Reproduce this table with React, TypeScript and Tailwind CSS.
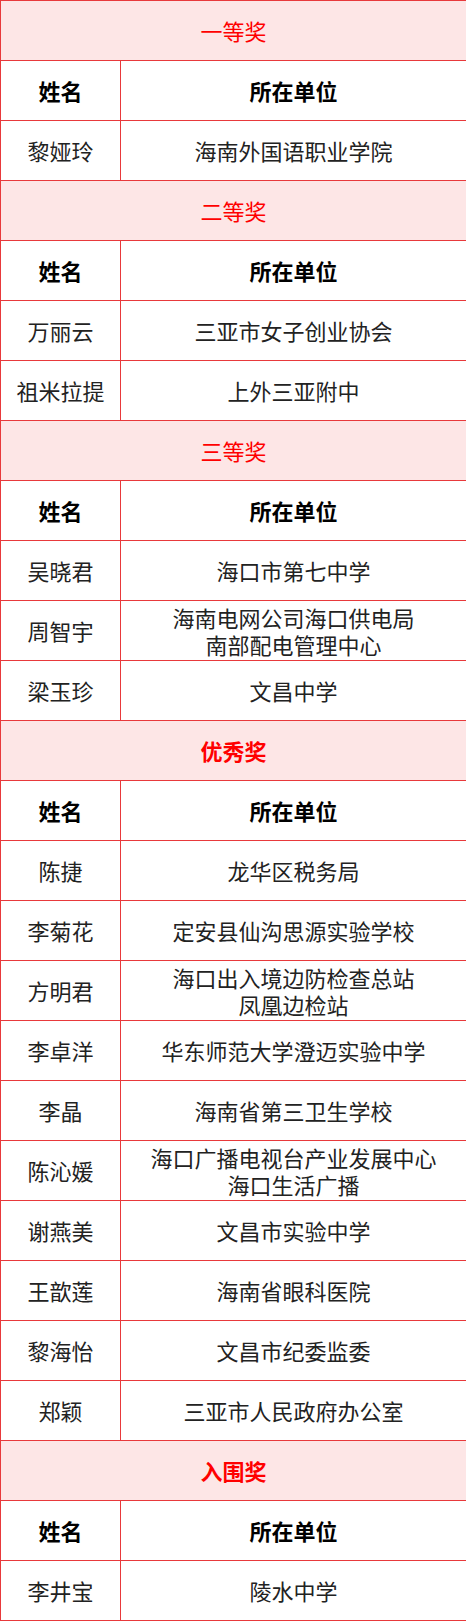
import React from "react";

type Section = {
  title: string;
  bold?: boolean;
  rows: [string, string[]][];
};

const sections: Section[] = [
  { title: "一等奖", rows: [["黎娅玲", ["海南外国语职业学院"]]] },
  {
    title: "二等奖",
    rows: [
      ["万丽云", ["三亚市女子创业协会"]],
      ["祖米拉提", ["上外三亚附中"]],
    ],
  },
  {
    title: "三等奖",
    rows: [
      ["吴晓君", ["海口市第七中学"]],
      ["周智宇", ["海南电网公司海口供电局", "南部配电管理中心"]],
      ["梁玉珍", ["文昌中学"]],
    ],
  },
  {
    title: "优秀奖",
    bold: true,
    rows: [
      ["陈捷", ["龙华区税务局"]],
      ["李菊花", ["定安县仙沟思源实验学校"]],
      ["方明君", ["海口出入境边防检查总站", "凤凰边检站"]],
      ["李卓洋", ["华东师范大学澄迈实验中学"]],
      ["李晶", ["海南省第三卫生学校"]],
      ["陈沁媛", ["海口广播电视台产业发展中心", "海口生活广播"]],
      ["谢燕美", ["文昌市实验中学"]],
      ["王歆莲", ["海南省眼科医院"]],
      ["黎海怡", ["文昌市纪委监委"]],
      ["郑颖", ["三亚市人民政府办公室"]],
    ],
  },
  {
    title: "入围奖",
    bold: true,
    rows: [["李井宝", ["陵水中学"]]],
  },
];

const cell =
  "h-[60px] border-r border-b border-[#e8393b] flex items-center justify-center text-center";

export default function App() {
  return (
    <div
      className="w-[466px] bg-white text-[22px] leading-[27px] text-[#222]"
      style={{ fontFamily: '"Noto Sans CJK SC", sans-serif' }}
    >
      <div className="grid grid-cols-[120px_346px] border-t border-l border-[#e8393b]">
        {sections.map((s) => (
          <React.Fragment key={s.title}>
            {/* 奖项标题 */}
            <div
              className={`col-span-2 bg-[#fde6e6] text-[#ff0000] ${
                s.bold ? "font-bold" : ""
              } ${cell}`}
            >
              {s.title}
            </div>
            {/* 表头 */}
            <div className={`${cell} font-bold text-black`}>姓名</div>
            <div className={`${cell} font-bold text-black`}>所在单位</div>
            {s.rows.map(([name, org]) => (
              <React.Fragment key={name}>
                <div className={cell}>{name}</div>
                <div className={cell}>
                  <p>
                    {org[0]}
                    {org[1] && (
                      <>
                        <br />
                        {org[1]}
                      </>
                    )}
                  </p>
                </div>
              </React.Fragment>
            ))}
          </React.Fragment>
        ))}
      </div>
    </div>
  );
}
